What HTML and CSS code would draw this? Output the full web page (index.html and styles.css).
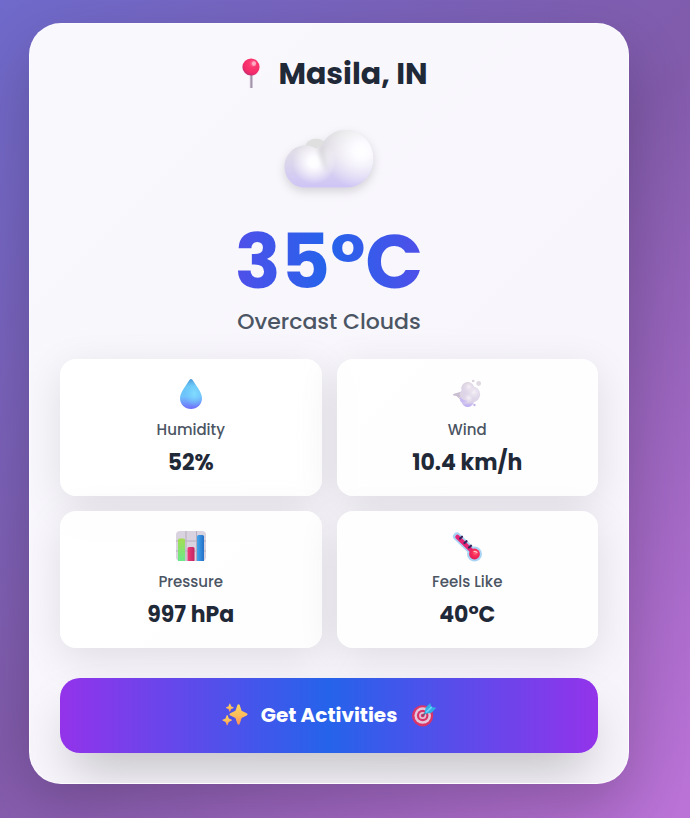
FILE: index.html
```
<!DOCTYPE html>
<html lang="en">
<head>
<meta charset="utf-8">
<meta name="viewport" content="width=device-width, initial-scale=1">
<title>Weather in Masila</title>
<link rel="stylesheet" href="styles.css">
</head>
<body>
<main class="card">
  <h1 class="place">
    <svg class="place-pin" viewBox="0 0 32 32" aria-hidden="true">
      <defs>
        <radialGradient id="pin" cx=".62" cy=".3" r=".75"><stop offset="0" stop-color="#ff7fa8"/><stop offset=".3" stop-color="#fb3770"/><stop offset=".7" stop-color="#f52c69"/><stop offset="1" stop-color="#c22c72"/></radialGradient>
        <linearGradient id="needle"><stop offset="0" stop-color="#cbc2d2"/><stop offset="1" stop-color="#8b7b94"/></linearGradient>
      </defs>
      <rect x="14.8" y="16" width="2.6" height="14" fill="url(#needle)"/>
      <circle cx="16" cy="9" r="8.600" fill="url(#pin)"/>
      <ellipse cx="19" cy="5.600" rx="2" ry="2.300" fill="#ffb7cb" opacity=".85"/>
    </svg>
    <span>Masila, IN</span>
  </h1>

  <svg class="sky" viewBox="0 0 96 96" role="img" aria-label="Cloud">
    <defs>
      <linearGradient id="cloudBase" x1="0" y1=".15" x2="0" y2=".8"><stop offset="0" stop-color="#dcdcdc"/><stop offset=".45" stop-color="#e0dce8"/><stop offset="1" stop-color="#cfc5f6"/></linearGradient>
      <radialGradient id="lightRight" gradientUnits="userSpaceOnUse" cx="80" cy="41" r="38"><stop offset="0" stop-color="#fff"/><stop offset=".22" stop-color="#fcfbff"/><stop offset="1" stop-color="#fff" stop-opacity="0"/></radialGradient>
      <radialGradient id="lightLeft" gradientUnits="userSpaceOnUse" cx="33" cy="52" r="22"><stop offset="0" stop-color="#fff"/><stop offset=".25" stop-color="#fdfcff"/><stop offset="1" stop-color="#fff" stop-opacity="0"/></radialGradient>
      <linearGradient id="crease"><stop offset="0" stop-color="#c9c9cc" stop-opacity=".8"/><stop offset="1" stop-color="#c9c9cc" stop-opacity="0"/></linearGradient>
      <clipPath id="cloudShape"><path d="M24 35.500c4 0 8 1 11 3L41 35C45 26 54 20 64.500 20c16 0 28 12.500 28 28.500S81 77.500 65 77.500H23.500C12 77.500 3.500 68 3.500 56.500S13 35.500 24 35.500z"/></clipPath>
      <filter id="soften" x="-50%" y="-50%" width="200%" height="200%"><feGaussianBlur stdDeviation="2"/></filter>
    </defs>
    <ellipse cx="35" cy="38" rx="11" ry="9.500" fill="#dfdfdf"/>
    <g clip-path="url(#cloudShape)">
      <rect width="96" height="96" fill="url(#cloudBase)"/>
      <circle cx="33" cy="52" r="22" fill="url(#lightLeft)"/>
      <path d="M37 37c1 8 3 16 7 24l6-4-4-24z" fill="url(#crease)" filter="url(#soften)"/>
      <circle cx="65" cy="48" r="29" fill="url(#lightRight)"/>
    </g>
  </svg>

  <p class="temperature">35°C</p>
  <p class="condition">Overcast Clouds</p>

  <dl class="stats">
    <div class="stat">
      <svg class="stat-icon" viewBox="0 0 32 32" aria-hidden="true">
        <defs><linearGradient id="drop" x1="0" y1="0" x2="0" y2="1"><stop offset="0" stop-color="#4e9bd8"/><stop offset=".25" stop-color="#68c7f6"/><stop offset=".58" stop-color="#70c3fb"/><stop offset="1" stop-color="#6f6dfa"/></linearGradient><radialGradient id="dropLight" cx=".65" cy=".48" r=".45"><stop offset="0" stop-color="#82dcff"/><stop offset="1" stop-color="#75ceff" stop-opacity="0"/></radialGradient></defs>
        <path d="M14.200 2.200Q16 0 17.800 2.200C22 9 27 15 27 20.200C27 26.500 22 31 16 31S5 26.500 5 20.200C5 15 10 9 14.200 2.200z" fill="url(#drop)"/>
        <path d="M14.200 2.200Q16 0 17.800 2.200C22 9 27 15 27 20.200C27 26.500 22 31 16 31S5 26.500 5 20.200C5 15 10 9 14.200 2.200z" fill="url(#dropLight)"/>
      </svg>
      <dt>Humidity</dt>
      <dd>52%</dd>
    </div>
    <div class="stat">
      <svg class="stat-icon" viewBox="0 0 32 32" aria-hidden="true">
        <defs><linearGradient id="puff" x1="0" y1="0" x2="0" y2="1"><stop offset="0" stop-color="#d8d1da"/><stop offset=".6" stop-color="#ddd4e8"/><stop offset="1" stop-color="#b5a4f4"/></linearGradient><radialGradient id="puffLight" cx=".6" cy=".35" r=".65"><stop offset="0" stop-color="#f6f2f7"/><stop offset="1" stop-color="#dcd2e6" stop-opacity="0"/></radialGradient></defs>
        <g transform="translate(.7 2)">
          <path d="M1.500 14l8.500-2.500 1.300 1.300-4 1.500L12 15v3l-5-.8 2.500 1.600-.8.900-4-3.700-3.200-.500z" fill="#c9bfd0"/>
          <circle cx="16" cy="8.500" r="6.500" fill="url(#puff)"/><circle cx="16" cy="20.500" r="6.500" fill="url(#puff)"/><circle cx="12" cy="19" r="3.800" fill="#c8b9f3"/><circle cx="14" cy="14.500" r="5.800" fill="#ddd4e6"/><circle cx="20.500" cy="14.300" r="7.900" fill="#ddd5e8"/><circle cx="20.500" cy="14.300" r="7.900" fill="url(#puffLight)"/><circle cx="16" cy="8.500" r="6" fill="url(#puffLight)"/><circle cx="16" cy="19.500" r="5" fill="url(#puffLight)"/>
          <circle cx="27" cy="3.500" r="2.400" fill="#e0d9e2"/><circle cx="21.500" cy="1" r="1.300" fill="#d8d1dd"/><circle cx="22.700" cy="25" r="1.200" fill="#c4b5e9"/>
        </g>
      </svg>
      <dt>Wind</dt>
      <dd>10.4 km/h</dd>
    </div>
    <div class="stat">
      <svg class="stat-icon" viewBox="0 0 32 32" aria-hidden="true">
        <defs><linearGradient id="green" x1="0" y1="0" x2="0" y2="1"><stop offset="0" stop-color="#a5dc52"/><stop offset="1" stop-color="#6be98a"/></linearGradient><linearGradient id="pink"><stop offset="0" stop-color="#ee3d78"/><stop offset="1" stop-color="#c32564"/></linearGradient><linearGradient id="blue"><stop offset="0" stop-color="#43a6ef"/><stop offset="1" stop-color="#246fc6"/></linearGradient></defs>
        <rect x="1" y="1" width="30" height="30" rx="4" fill="#d9d2df"/>
        <path d="M1 11h30M1 21h30M11 1v30M21.500 1v30" stroke="#b7adbf" stroke-width="1" fill="none"/>
        <path d="M3 31V10q0-1.500 1.500-1.500h4Q10 8.500 10 10v21z" fill="url(#green)"/>
        <path d="M12.500 31V18.500q0-1.500 1.500-1.500h4q1.500 0 1.500 1.500V31z" fill="url(#pink)"/>
        <path d="M22 31V6.500Q22 5 23.500 5h4Q29 5 29 6.500V31z" fill="url(#blue)"/>
      </svg>
      <dt>Pressure</dt>
      <dd>997 hPa</dd>
    </div>
    <div class="stat">
      <svg class="stat-icon" viewBox="0 0 32 32" aria-hidden="true">
        <defs><radialGradient id="bulb" cx=".58" cy=".4" r=".7"><stop offset="0" stop-color="#ff7189"/><stop offset=".35" stop-color="#fc3158"/><stop offset="1" stop-color="#dc155c"/></radialGradient></defs>
        <path d="M6 6.500L22 22" stroke="#a9d5f5" stroke-width="8" stroke-linecap="round"/>
        <circle cx="23.500" cy="24" r="7.500" fill="#a9d5f5"/>
        <path d="M6.500 7L22 22" stroke="#e52676" stroke-width="4.500" stroke-linecap="round"/>
        <circle cx="23.500" cy="24" r="5.400" fill="url(#bulb)"/>
        <path d="M9 8.500L11 6.700M13.500 13L15.500 11.200M18 17.500L20 15.700" stroke="#35255d" stroke-width="2.200" stroke-linecap="round"/>
        <path d="M23 21.500q2-.7 3 1" stroke="#ffc7cc" stroke-width="1.200" fill="none" stroke-linecap="round"/>
      </svg>
      <dt>Feels Like</dt>
      <dd>40°C</dd>
    </div>
  </dl>

  <button class="action" type="button">
    <svg class="action-icon" viewBox="0 0 28 28" aria-hidden="true">
      <defs><linearGradient id="spark" x1="0" y1="0" x2="0" y2="1"><stop offset="0" stop-color="#ffd45b"/><stop offset=".55" stop-color="#fdbd5b"/><stop offset="1" stop-color="#fa8b5b"/></linearGradient></defs>
      <g fill="url(#spark)" transform="translate(2 1) scale(.92)">
        <path d="M16.700 3.500c.5-1.400 2.100-1.400 2.600 0l2 6 5.600 2.700c1.200.6 1.200 2 0 2.600l-5.600 2.700-2 6.200c-.5 1.400-2.100 1.400-2.600 0l-2.100-6.200L9 14.800c-1.200-.6-1.200-2 0-2.600l5.600-2.700z"/>
        <path d="M8 2.200c.2-.8.8-.8 1 0l.9 2.500 2.300.9c.8.3.8.9 0 1.200l-2.300.9L9 10.100c-.2.800-.8.800-1 0l-.9-2.400-2.300-.9c-.8-.3-.8-.9 0-1.200l2.300-.9z"/>
        <path d="M5 14.700c.2-.9.900-.9 1.200 0l1.200 3.200 2.700 1.200c.9.400.9 1 0 1.400l-2.700 1.200-1.200 3.100c-.3.900-1 .9-1.200 0l-1.200-3.100-2.700-1.200c-.9-.4-.9-1 0-1.400l2.700-1.200z"/>
      </g>
    </svg>
    <span>Get Activities</span>
    <svg class="action-icon" viewBox="0 0 28 28" aria-hidden="true">
      <g transform="translate(1 1) scale(.92)">
        <circle cx="12.700" cy="15" r="11.500" fill="#d93468"/>
        <circle cx="12.700" cy="14.700" r="9" fill="#e4c6dc"/>
        <circle cx="12.700" cy="14.700" r="6.300" fill="#d93468"/>
        <circle cx="12.700" cy="14.700" r="3.900" fill="#e2bfd6"/>
        <circle cx="12.700" cy="14.700" r="2" fill="#d93468"/>
        <path d="M13 14.500l6-6" stroke="#735577" stroke-width="1.800" stroke-linecap="round"/>
        <path d="M14.500 13l1.500-7 5-5 1 4.300 5.500 1-5.300 5.300z" fill="#2faee5"/>
        <path d="M17 10.800l5-5" stroke="#69cfff" stroke-width="2" stroke-linecap="round"/>
      </g>
    </svg>
  </button>
</main>
</body>
</html>
```
FILE: styles.css
```
* {
  box-sizing: border-box;
}

body {
  margin: 0;
  min-height: 100vh;
  padding: 23px 61px 34px 29px;
  font-family: Poppins, Inter, "Liberation Sans", sans-serif;
  color: #1f2937;
  background: linear-gradient(135deg, #6f6acb 0%, #825bab 50%, #bc73d8 100%);
}

.card {
  display: flex;
  flex-direction: column;
  align-items: center;
  max-width: 600px;
  padding: 30px;
  border: 1px solid rgba(255, 255, 255, 0.5);
  border-radius: 32px;
  overflow: hidden;
  background: linear-gradient(135deg, #f9f8fd, #f7f5fb);
  box-shadow: 0 24px 60px rgba(0, 0, 0, 0.2);
}

.place {
  display: flex;
  align-items: center;
  gap: 11px;
  margin: 0;
  padding-left: 5px;
  font-size: 30px;
  line-height: 40px;
  font-weight: 700;
}

.place-pin {
  width: 32px;
  height: 32px;
}

.sky {
  width: 96px;
  height: 96px;
  margin: 16px 0 18px;
  filter: drop-shadow(0 4px 5px rgba(0, 0, 0, 0.14));
}

.temperature {
  margin: 0;
  font-size: 76px;
  line-height: 76px;
  font-weight: 700;
  color: transparent;
  background: linear-gradient(90deg, #4f4fe9, #2563eb 50%, #4f4fe9);
  background-clip: text;
  -webkit-background-clip: text;
}

.condition {
  margin: 4px 0 19px;
  font-size: 22px;
  line-height: 36px;
  font-weight: 500;
  color: #4b5563;
}

.stats {
  display: grid;
  grid-template-columns: 1fr 1fr;
  gap: 15px;
  width: 100%;
  margin: 0;
}

.stat {
  display: flex;
  flex-direction: column;
  align-items: center;
  padding: 19px 16px 16px;
  border-radius: 16px;
  background: rgba(255, 255, 255, 0.9);
  box-shadow: 0 10px 40px rgba(0, 0, 0, 0.1);
}

.stat-icon {
  width: 32px;
  height: 32px;
}

.stat dt {
  margin-top: 8px;
  font-size: 15px;
  line-height: 24px;
  font-weight: 500;
  color: #4b5563;
}

.stat dd {
  margin: 3px 0 0;
  font-size: 22px;
  line-height: 35px;
  font-weight: 700;
}

.action {
  display: flex;
  align-items: center;
  justify-content: center;
  gap: 13px;
  width: 100%;
  min-height: 75px;
  margin-top: 30px;
  padding: 16px 16px 18px;
  border: 0;
  border-radius: 20px;
  font-family: inherit;
  font-size: 20px;
  font-weight: 700;
  color: #fff;
  background: linear-gradient(90deg, #9333ea, #2563eb 50%, #9333ea);
  box-shadow: 0 25px 50px -12px rgba(0, 0, 0, 0.25);
  cursor: pointer;
}

.action-icon {
  width: 28px;
  height: 28px;
}
```
